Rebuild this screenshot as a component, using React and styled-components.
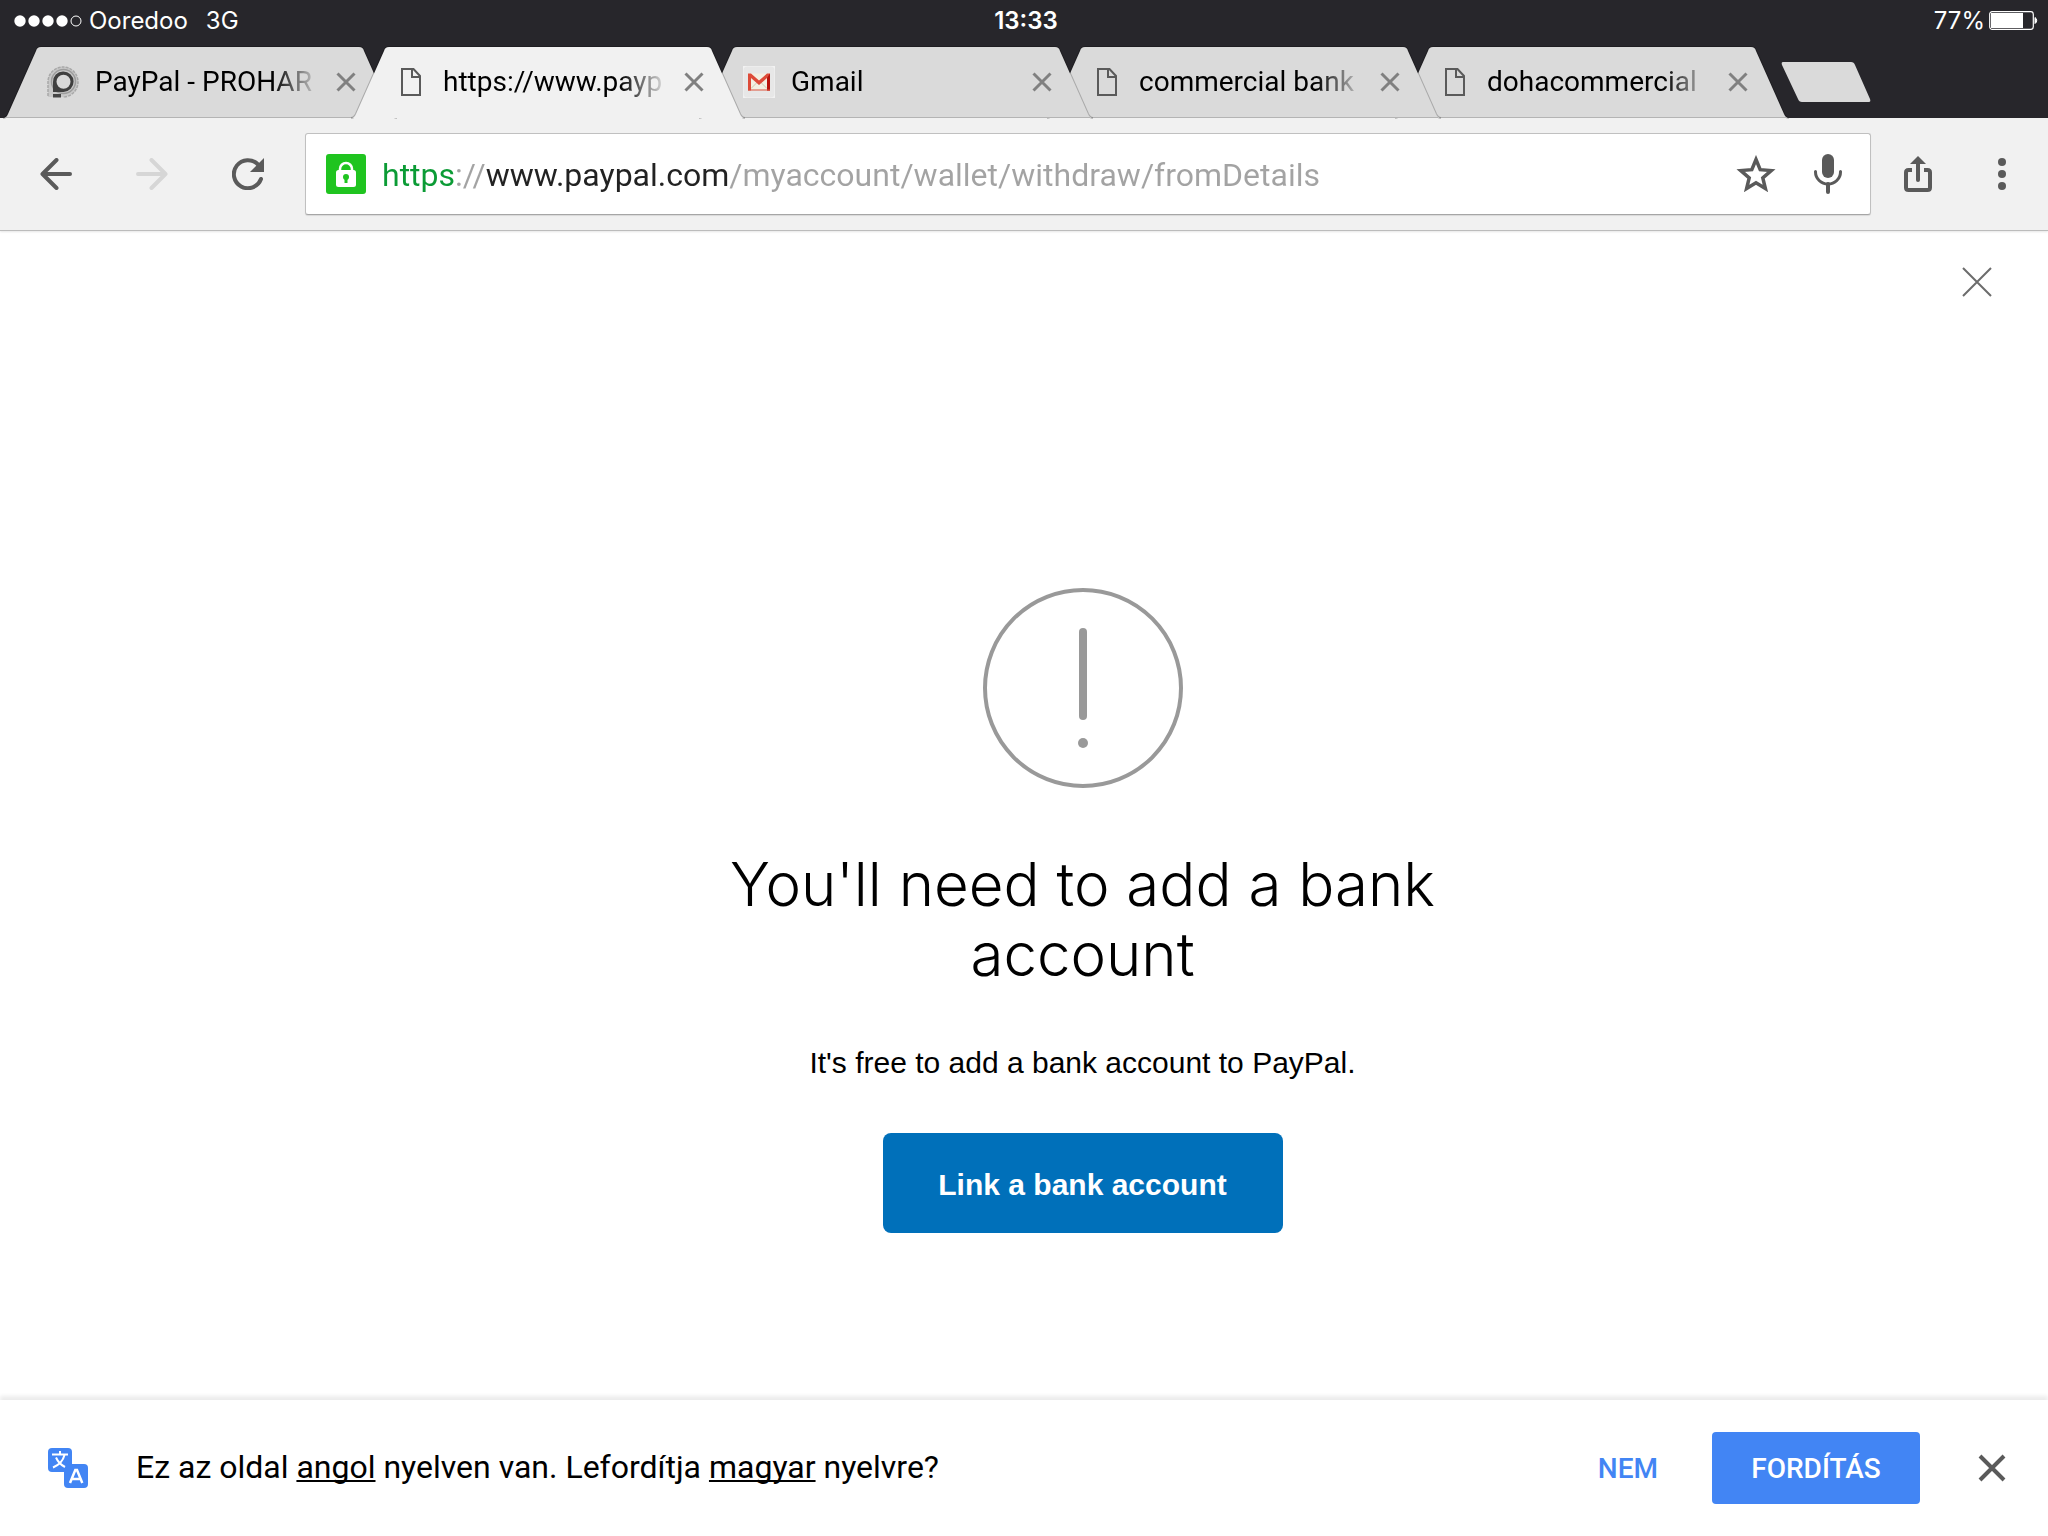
import React, { useState } from 'react';
import styled, { createGlobalStyle } from 'styled-components';

const GlobalStyle = createGlobalStyle`
    * {
        box-sizing: border-box;
    }
    body {
        margin: 0;
        background: #fff;
        color: #000;
        font-family: Roboto, sans-serif;
    }
    button {
        margin: 0;
        padding: 0;
        border: 0;
        background: none;
        color: inherit;
        font: inherit;
    }
    svg {
        display: block;
    }
`;

const Screen = styled.div`
    display: flex;
    flex-direction: column;
    min-height: 100vh;
`;

/* status bar */

const StatusBar = styled.header`
    display: grid;
    grid-template-columns: 1fr auto 1fr;
    align-items: center;
    height: 47px;
    padding: 0 10px 6px 14px;
    background: #27262b;
    color: #fff;
    font-family: Inter, sans-serif;
    font-size: 24px;
    line-height: 28px;
`;

const Carrier = styled.div`
    display: flex;
    align-items: center;
    gap: 6px;
`;

const Network = styled.span`
    margin-left: 12px;
`;

const Clock = styled.time`
    font-weight: 600;
`;

const Battery = styled.div`
    display: flex;
    align-items: center;
    justify-content: flex-end;
    gap: 4px;
`;

/* tabs */

const TabStrip = styled.nav`
    display: flex;
    align-items: flex-start;
    height: 71px;
    padding-left: 5px;
    background: #27262b;
`;

const TabItem = styled.div`
    display: grid;
    grid-template-columns: minmax(0, 1fr);
    position: relative;
    z-index: ${props => props.$order};
    flex: 0 0 390px;
    height: 71px;
    margin-right: -42px;
    > * {
        grid-area: 1 / 1;
    }
`;

const TabShape = styled.svg`
    width: 390px;
    height: 71px;
    overflow: visible;
`;

const TabContent = styled.div`
    display: flex;
    align-items: center;
    height: 70px;
    padding: 0 27px 0 42px;
`;

const TabLabel = styled.button`
    display: flex;
    align-items: center;
    flex: 1;
    gap: 16px;
    min-width: 0;
    text-align: left;
`;

const TabIcon = styled.span`
    display: flex;
    justify-content: center;
    flex: 0 0 32px;
`;

const TabTitle = styled.span`
    flex: 1;
    overflow: hidden;
    font-size: 28px;
    line-height: 36px;
    white-space: nowrap;
    mask-image: linear-gradient(to right, #000 calc(100% - 48px), transparent);
`;

const TabClose = styled.button`
    display: flex;
    align-items: center;
    justify-content: center;
    width: 44px;
    height: 44px;
    margin-left: 4px;
`;

const NewTab = styled.button`
    margin: 15px 0 0 36px;
`;

/* toolbar */

const Toolbar = styled.div`
    display: flex;
    align-items: center;
    height: 113px;
    padding: 0 22px 0 32px;
    background: #f1f1f1;
    border-bottom: 1px solid #bcbcbc;
    box-shadow: 0 1px 2px rgba(0, 0, 0, 0.1);
`;

const ToolButton = styled.button`
    display: flex;
    align-items: center;
    justify-content: center;
    width: 48px;
    height: 48px;
    color: #5a5a5a;
    &:disabled {
        color: #d6d6d6;
    }
`;

const NavButtons = styled.div`
    display: flex;
    gap: 48px;
    margin-right: 33px;
`;

const MenuButtons = styled.div`
    display: flex;
    gap: 36px;
    margin-left: 23px;
`;

const Omnibox = styled.form`
    display: flex;
    align-items: center;
    flex: 1;
    height: 82px;
    padding: 0 18px 0 20px;
    background: #fff;
    border: 1px solid #c0c0c0;
    border-bottom-color: #a6a6a6;
    border-radius: 3px;
    box-shadow: 0 1px 1px rgba(0, 0, 0, 0.1);
`;

/* scheme in green, host in black, everything else in grey */
const Address = styled.input`
    flex: 1;
    min-width: 0;
    height: 48px;
    margin: 0 12px 0 16px;
    padding: 2px 0 0;
    border: 0;
    outline: 0;
    font: 32px/40px Roboto, sans-serif;
    color: transparent;
    background: linear-gradient(
        to right,
        #0b9b35 0 72px,
        #a3a3a3 72px 103px,
        #222 103px 347px,
        #a3a3a3 347px
    );
    background-clip: text;
    -webkit-background-clip: text;
`;

const AddressActions = styled.div`
    display: flex;
    gap: 24px;
`;

/* page */

const Page = styled.main`
    flex: 1;
    display: flex;
    flex-direction: column;
`;

const PageClose = styled.button`
    align-self: flex-end;
    margin: 36px 56px 0 0;
`;

const Notice = styled.section`
    display: flex;
    flex-direction: column;
    align-items: center;
    align-self: center;
    width: 720px;
    max-width: 100%;
    margin: 291px 0 0 117px;
    text-align: center;
    font-family: "Liberation Sans", sans-serif;
`;

const Title = styled.h1`
    margin: 61px 0 0;
    font-family: Inter, sans-serif;
    font-size: 60px;
    font-weight: 300;
    line-height: 70px;
`;

const Text = styled.p`
    margin: 54px 0 0;
    font-size: 30px;
    line-height: 40px;
`;

const LinkButton = styled.button`
    width: 400px;
    height: 100px;
    margin-top: 50px;
    padding-top: 4px;
    border-radius: 8px;
    background: #0070ba;
    color: #fff;
    font-size: 30px;
    font-weight: 700;
`;

/* translate bar */

const TranslateBar = styled.footer`
    display: flex;
    align-items: center;
    height: 136px;
    padding: 0 32px 0 48px;
    background: #fff;
    box-shadow: 0 -4px 4px rgba(0, 0, 0, 0.08);
`;

const Question = styled.p`
    flex: 1;
    margin: 0 0 0 48px;
    padding-bottom: 2px;
    font-size: 32px;
    line-height: 40px;
`;

const Language = styled.a`
    color: inherit;
    text-decoration-thickness: 2px;
    text-decoration-skip-ink: none;
    text-underline-offset: 2px;
`;

const Decline = styled.button`
    margin-right: 54px;
    color: #4285f4;
    font-size: 28px;
    font-weight: 500;
`;

const Accept = styled.button`
    width: 208px;
    height: 72px;
    margin-right: 48px;
    border-radius: 4px;
    background: #4285f4;
    color: #fff;
    font-size: 28px;
    font-weight: 500;
`;

const SignalIcon = () => (
    <svg width="69" height="12" viewBox="0 0 69 12">
        {[6, 20, 34, 48].map(x => <circle key={x} cx={x} cy="6" r="5.7" fill="#fff" />)}
        <circle cx="62" cy="6" r="5" fill="none" stroke="#fff" />
    </svg>
);

const BatteryIcon = () => (
    <svg width="49" height="19" viewBox="0 0 49 19">
        <rect x="0.7" y="0.7" width="43.6" height="17.6" rx="2.5" fill="none" stroke="#fff" strokeWidth="1.2" />
        <rect x="2" y="2" width="32" height="15" fill="#fff" />
        <path d="M46 6.5a3.5 3.5 0 0 1 0 6z" fill="#fff" stroke="#fff" />
    </svg>
);

const CrossIcon = ({ size, stroke, color }) => {
    const near = stroke / 2;
    const far = size - near;
    return (
        <svg width={size} height={size} viewBox={`0 0 ${size} ${size}`}>
            <path d={`M${near} ${near}L${far} ${far}M${far} ${near}L${near} ${far}`} stroke={color} strokeWidth={stroke} />
        </svg>
    );
};

const FileIcon = () => (
    <svg width="20" height="28" viewBox="0 0 20 28" fill="none" stroke="#5a5a5a" strokeWidth="2">
        <path d="M1 1H12.5L19 8V27H1Z" />
        <path d="M11 1V9H19" />
    </svg>
);

const ForumIcon = () => (
    <svg width="32" height="32" viewBox="0 0 32 32" fill="none">
        <path d="M1 31V16A15 15 0 1 1 16 31Z" fill="#c8c8c8" />
        <path d="M1 30V16A15 15 0 1 1 16 31" stroke="#a8a8a8" strokeWidth="1.5" strokeDasharray="3 1" />
        <circle cx="16.5" cy="15.5" r="12" stroke="#9c9c9c" strokeWidth="1.5" />
        <path d="M6 26V16A10.3 10.3 0 1 1 16.5 26Z" fill="#3f3f3f" />
        <circle cx="16.5" cy="15.7" r="7" fill="#d9d9d9" />
        <path d="M6 28H14V31.5H6Z" fill="#444" />
    </svg>
);

const GmailIcon = () => (
    <svg width="32" height="32" viewBox="0 0 32 32">
        <rect width="32" height="32" fill="#f2f2f2" />
        <rect x="0.5" y="0.5" width="31" height="31" rx="4" fill="#e7e7e7" />
        <rect x="5" y="7.5" width="22" height="17" rx="1" fill="#f3f0e2" />
        <path d="M8 22.5L14 16.5M24 22.5L18 16.5" stroke="#cfc9ae" />
        <path d="M5 24.5V7.5H8L16 14.5L24 7.5H27V24.5H24V12L16 19L8 12V24.5Z" fill="#dd4b39" />
        <path d="M24 12V24.5H27V7.5Z" fill="#b8140c" />
        <path d="M5 24H27" stroke="#d8503f" />
    </svg>
);

const BackIcon = () => (
    <svg width="32" height="32" viewBox="0 0 32 32" fill="none" stroke="currentColor" strokeWidth="4" strokeLinecap="round">
        <path d="M30 16H3M16.5 2L2.5 16L16.5 30" strokeLinejoin="round" />
    </svg>
);

const ForwardIcon = () => (
    <svg width="32" height="32" viewBox="0 0 32 32" fill="none" stroke="currentColor" strokeWidth="4" strokeLinecap="round">
        <path d="M2 16H29M15.5 2L29.5 16L15.5 30" strokeLinejoin="round" />
    </svg>
);

const ReloadIcon = () => (
    <svg width="32" height="32" viewBox="0 0 32 32">
        <path d="M26 6.5A14 14 0 1 0 29 21" fill="none" stroke="currentColor" strokeWidth="4" strokeLinecap="round" />
        <path d="M32 0V14H18Z" fill="currentColor" />
    </svg>
);

const LockIcon = () => (
    <svg width="40" height="40" viewBox="0 0 40 40">
        <rect width="40" height="40" rx="3" fill="#1fc41f" />
        <path d="M14 17V15A6 6 0 0 1 26 15V17" fill="none" stroke="#fff" strokeWidth="2.5" />
        <rect x="10" y="16" width="20" height="17" rx="2.5" fill="#fff" />
        <circle cx="20" cy="23" r="3" fill="#1fc41f" />
        <path d="M18.5 24H21.5V29H18.5Z" fill="#1fc41f" />
    </svg>
);

const StarIcon = () => (
    <svg width="40" height="38" viewBox="0 0 40 38">
        <path
            d="M20 4.5L24.2 14.7L35.2 15.6L26.8 22.8L29.4 33.5L20 27.8L10.6 33.5L13.2 22.8L4.8 15.6L15.8 14.7Z"
            fill="none"
            stroke="currentColor"
            strokeWidth="3.5"
        />
    </svg>
);

const MicIcon = () => (
    <svg width="28" height="40" viewBox="0 0 28 40">
        <rect x="8" y="0" width="12" height="24" rx="6" fill="currentColor" />
        <path d="M1.5 17.5V18A12.5 12 0 0 0 26.5 18V17.5" fill="none" stroke="currentColor" strokeWidth="3" strokeLinecap="round" />
        <path d="M14 30V38" stroke="currentColor" strokeWidth="4" strokeLinecap="round" />
    </svg>
);

const ShareIcon = () => (
    <svg width="28" height="36" viewBox="0 0 28 36">
        <path d="M8 14H4.500Q2 14 2 16.500V31.500Q2 34 4.500 34H23.500Q26 34 26 31.500V16.500Q26 14 23.500 14H20" fill="none" stroke="currentColor" strokeWidth="4" />
        <path d="M14 6V24" stroke="currentColor" strokeWidth="4" strokeLinecap="round" />
        <path d="M14 0L22 8H6Z" fill="currentColor" />
    </svg>
);

const DotsIcon = () => (
    <svg width="8" height="32" viewBox="0 0 8 32" fill="currentColor">
        <circle cx="4" cy="4" r="4" />
        <circle cx="4" cy="16" r="4" />
        <circle cx="4" cy="28" r="4" />
    </svg>
);

const AlertIcon = () => (
    <svg width="200" height="200" viewBox="0 0 200 200">
        <circle cx="100" cy="100" r="98" fill="none" stroke="#999" strokeWidth="4" />
        <rect x="96" y="40" width="8" height="92" rx="4" fill="#999" />
        <circle cx="100" cy="155" r="5" fill="#999" />
    </svg>
);

const TranslateIcon = () => (
    <svg width="40" height="40" viewBox="0 0 40 40">
        <rect width="24" height="24" rx="4" fill="#4285f4" />
        <rect x="16" y="16" width="24" height="24" rx="4" fill="#4285f4" />
        <path d="M12 3V6M4 6.5H20M16.5 7C15 13 11 17 5 19.5M8 9.5C10 14 13 17 17 19" fill="none" stroke="#fff" strokeWidth="2" />
        <path d="M22 35L27.3 22H29L34.3 35M23.5 31H32.5" fill="none" stroke="#fff" strokeWidth="2.5" />
    </svg>
);

const tabs = [
    { id: 1, title: 'PayPal - PROHAR', icon: <ForumIcon /> },
    { id: 2, title: 'https://www.payp', icon: <FileIcon /> },
    { id: 3, title: 'Gmail', icon: <GmailIcon /> },
    { id: 4, title: 'commercial bank', icon: <FileIcon /> },
    { id: 5, title: 'dohacommercial', icon: <FileIcon /> }
];

const tabOutline = 'M-2 71C1 71 2 69 3 67L31 4C32 1 33 0 36 0H354C357 0 358 1 359 4L387 67C388 69 389 71 392 71';

const Tab = ({ tab, active, order, onSelect }) => (
    <TabItem $order={active ? 10 : order}>
        <TabShape viewBox="0 0 390 71" aria-hidden="true">
            <path d={tabOutline} fill="none" stroke="#000" strokeOpacity="0.22" strokeWidth="2" />
            <path d={tabOutline} fill={active ? '#f1f1f1' : '#dadada'} />
            {!active && <path d="M1 70.5H389" stroke="#b4b4b4" />}
        </TabShape>
        <TabContent>
            <TabLabel onClick={onSelect}>
                <TabIcon>{tab.icon}</TabIcon>
                <TabTitle>{tab.title}</TabTitle>
            </TabLabel>
            <TabClose aria-label="Close tab">
                <CrossIcon size={20} stroke={3} color="#808080" />
            </TabClose>
        </TabContent>
    </TabItem>
);

export default function App() {
    const [activeTab, setActiveTab] = useState(2);
    const [address, setAddress] = useState('https://www.paypal.com/myaccount/wallet/withdraw/fromDetails');

    return (
        <Screen>
            <GlobalStyle />
            <StatusBar>
                <Carrier>
                    <SignalIcon />
                    <span>Ooredoo</span>
                    <Network>3G</Network>
                </Carrier>
                <Clock>13:33</Clock>
                <Battery>
                    <span>77%</span>
                    <BatteryIcon />
                </Battery>
            </StatusBar>
            <TabStrip>
                {tabs.map((tab, i) => (
                    <Tab
                        key={tab.id}
                        tab={tab}
                        active={tab.id === activeTab}
                        order={tabs.length - i}
                        onSelect={() => setActiveTab(tab.id)}
                    />
                ))}
                <NewTab aria-label="New tab">
                    <svg width="90" height="40" viewBox="0 0 90 40">
                        <path d="M2 0H70Q73 0 74 3L89 37Q90 40 88 40H21Q18 40 17 37L1 3Q0 0 2 0Z" fill="#dadada" />
                    </svg>
                </NewTab>
            </TabStrip>
            <Toolbar>
                <NavButtons>
                    <ToolButton aria-label="Back"><BackIcon /></ToolButton>
                    <ToolButton aria-label="Forward" disabled><ForwardIcon /></ToolButton>
                    <ToolButton aria-label="Reload"><ReloadIcon /></ToolButton>
                </NavButtons>
                <Omnibox onSubmit={event => event.preventDefault()}>
                    <LockIcon />
                    <Address aria-label="Address" value={address} onChange={event => setAddress(event.target.value)} />
                    <AddressActions>
                        <ToolButton type="button" aria-label="Bookmark"><StarIcon /></ToolButton>
                        <ToolButton type="button" aria-label="Voice search"><MicIcon /></ToolButton>
                    </AddressActions>
                </Omnibox>
                <MenuButtons>
                    <ToolButton aria-label="Share"><ShareIcon /></ToolButton>
                    <ToolButton aria-label="Menu"><DotsIcon /></ToolButton>
                </MenuButtons>
            </Toolbar>
            <Page>
                <PageClose aria-label="Close">
                    <CrossIcon size={30} stroke={2} color="#6c6c6c" />
                </PageClose>
                <Notice>
                    <AlertIcon />
                    <Title>You'll need to add a bank account</Title>
                    <Text>It's free to add a bank account to PayPal.</Text>
                    <LinkButton>Link a bank account</LinkButton>
                </Notice>
            </Page>
            <TranslateBar>
                <TranslateIcon />
                <Question>
                    Ez az oldal <Language href="#from">angol</Language> nyelven van. Lefordítja <Language href="#to">magyar</Language> nyelvre?
                </Question>
                <Decline>NEM</Decline>
                <Accept>FORDÍTÁS</Accept>
                <ToolButton aria-label="Dismiss">
                    <CrossIcon size={28} stroke={4} color="#5a5a5a" />
                </ToolButton>
            </TranslateBar>
        </Screen>
    );
}
